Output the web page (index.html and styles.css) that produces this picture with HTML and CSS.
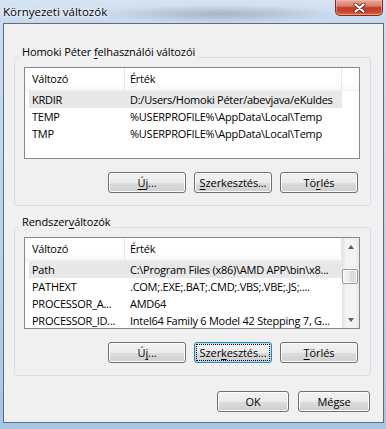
FILE: index.html
```html
<!DOCTYPE html>
<html lang="hu">
<head>
  <meta charset="UTF-8">
  <title>Környezeti változók</title>
  <link rel="stylesheet" href="styles.css">
</head>
<body>
  <div class="window">
    <div class="titlebar">
      <span class="title">Környezeti változók</span>
      <button class="close" aria-label="Bezárás">
        <svg width="13" height="10" viewBox="0 0 13 10">
          <path d="M2.5 1.5 L10.5 8.5 M10.5 1.5 L2.5 8.5" stroke="#6b2a1f" stroke-width="4" stroke-linecap="round"/>
          <path d="M2.5 1.5 L10.5 8.5 M10.5 1.5 L2.5 8.5" stroke="#fff" stroke-width="2.2" stroke-linecap="round"/>
        </svg>
      </button>
    </div>

    <div class="client">
      <!-- user variables -->
      <div class="group group-user">
        <div class="group-title">Homoki Péter <u>f</u>elhasználói változói</div>
        <div class="list">
          <div class="list-main">
            <div class="list-head">
              <span class="head-name">Változó</span>
              <span class="head-value">Érték</span>
            </div>
            <div class="row selected">
              <span class="col-name">KRDIR</span>
              <span class="col-value">D:/Users/Homoki Péter/abevjava/eKuldes</span>
            </div>
            <div class="row">
              <span class="col-name">TEMP</span>
              <span class="col-value">%USERPROFILE%\AppData\Local\Temp</span>
            </div>
            <div class="row">
              <span class="col-name">TMP</span>
              <span class="col-value">%USERPROFILE%\AppData\Local\Temp</span>
            </div>
          </div>
        </div>
        <div class="buttons">
          <button class="btn"><u>Ú</u>j...</button>
          <button class="btn"><u>S</u>zerkesztés...</button>
          <button class="btn">Tö<u>r</u>lés</button>
        </div>
      </div>

      <!-- system variables -->
      <div class="group group-system">
        <div class="group-title">Rendszer<u>v</u>áltozók</div>
        <div class="list">
          <div class="list-main">
            <div class="list-head">
              <span class="head-name">Változó</span>
              <span class="head-value">Érték</span>
            </div>
            <div class="row selected">
              <span class="col-name">Path</span>
              <span class="col-value">C:\Program Files (x86)\AMD APP\bin\x8...</span>
            </div>
            <div class="row">
              <span class="col-name">PATHEXT</span>
              <span class="col-value">.COM;.EXE;.BAT;.CMD;.VBS;.VBE;.JS;....</span>
            </div>
            <div class="row">
              <span class="col-name">PROCESSOR_A...</span>
              <span class="col-value">AMD64</span>
            </div>
            <div class="row">
              <span class="col-name">PROCESSOR_ID...</span>
              <span class="col-value">Intel64 Family 6 Model 42 Stepping 7, G...</span>
            </div>
          </div>
          <div class="scrollbar">
            <div class="sb-arrow"><span class="arrow-up"></span></div>
            <div class="sb-track"><div class="sb-thumb"></div></div>
            <div class="sb-arrow"><span class="arrow-down"></span></div>
          </div>
        </div>
        <div class="buttons">
          <button class="btn">Ú<u>j</u>...</button>
          <button class="btn focused">Szer<u>k</u>esztés...</button>
          <button class="btn"><u>T</u>örlés</button>
        </div>
      </div>

      <div class="dialog-buttons">
        <button class="btn btn-small">OK</button>
        <button class="btn btn-small">Mégse</button>
      </div>
    </div>
  </div>
</body>
</html>
```

FILE: styles.css
```css
* {
  box-sizing: border-box;
}

body {
  margin: 0;
  font-family: "Open Sans", "Noto Sans", sans-serif;
  font-size: 11px;
  letter-spacing: -0.1px;
  color: #000;
  background-color: #b9d0ea;
}

u {
  text-decoration-thickness: 1px;
  text-underline-offset: 2px;
}

.window {
  width: 386px;
  height: 429px;
  overflow: hidden;
  background: linear-gradient(to bottom, #cddef0, #bad1ea 55%, #a8c4e4);
}

/* Title bar */
.titlebar {
  height: 23px;
  display: flex;
  justify-content: space-between;
  align-items: flex-start;
  background:
    radial-gradient(ellipse 120px 9px at 220px 14px, rgba(95, 105, 120, 0.35), rgba(95, 105, 120, 0)),
    linear-gradient(to bottom, #d5e3f2, #c7d9ed);
}

.title {
  padding: 4px 0 0 3px;
  font-size: 11.5px;
  letter-spacing: 0;
  line-height: 15px;
  text-shadow: 0 0 6px #fff, 0 0 3px #fff;
}

.close {
  width: 48px;
  height: 16px;
  margin-right: 3px;
  padding: 0;
  border: 1px solid #862a1e;
  border-top: none;
  border-radius: 0 0 5px 5px;
  background: linear-gradient(to bottom, #e8a898 0%, #d97f6b 40%, #c53b25 52%, #c9462c 80%, #dc7754 100%);
  box-shadow: inset 0 0 0 1px rgba(255, 200, 190, 0.45);
  display: flex;
  align-items: center;
  justify-content: center;
}

/* Client area */
.client {
  width: 381px;
  height: 400px;
  margin-left: 3px;
  padding: 0 12px 0 10px;
  background-color: #f0f0f0;
  border: 1px solid #5d6d80;
}

.group {
  border: 1px solid #d5dfe5;
  border-radius: 3px;
  padding: 0 10px 12px 9px;
}

.group-user {
  margin-top: 33px;
}

.group-system {
  margin-top: 21px;
}

.group-title {
  width: fit-content;
  margin: -14px 0 0 -5px;
  padding: 0 3px;
  line-height: 15px;
  background-color: #f0f0f0;
}

/* List views */
.list {
  display: flex;
  height: 92px;
  margin-top: 8px;
  letter-spacing: -0.25px;
  background-color: #fff;
  border: 1px solid #828790;
  overflow: hidden;
}

.list-main {
  flex: 1;
  overflow: hidden;
}

.list-head {
  display: flex;
  height: 23px;
  line-height: 22px;
  border-bottom: 1px solid #eef0f2;
  background: linear-gradient(to bottom, #fff 70%, #f7f8f9);
}

.head-name,
.head-value {
  border-right: 1px solid #e3e8ee;
  white-space: nowrap;
}

.head-name {
  width: 100px;
  padding-left: 7px;
}

.head-value {
  width: 217px;
  padding-left: 5px;
}

.row {
  display: flex;
  width: 313px;
  height: 17px;
  margin-left: 4px;
  padding-top: 1px;
  line-height: 16px;
  white-space: nowrap;
}

.row.selected {
  background-color: #e8e8e8;
}

.col-name {
  width: 96px;
  padding-left: 3px;
  overflow: hidden;
}

.col-value {
  width: 217px;
  padding-left: 5px;
  overflow: hidden;
}

/* Scroll bar */
.scrollbar {
  width: 17px;
  display: flex;
  flex-direction: column;
  background: linear-gradient(to right, #e2e2e2, #f3f3f3 25%, #f3f3f3 75%, #e8e8e8);
}

.sb-arrow {
  height: 17px;
  display: flex;
  align-items: center;
  justify-content: center;
}

.arrow-up,
.arrow-down {
  width: 0;
  height: 0;
  border-left: 3.5px solid transparent;
  border-right: 3.5px solid transparent;
}

.arrow-up {
  border-bottom: 4px solid #5e5e5e;
}

.arrow-down {
  border-top: 4px solid #5e5e5e;
}

.sb-track {
  flex: 1;
  padding-top: 14px;
}

.sb-thumb {
  height: 15px;
  margin: 0 1px 0 0;
  border: 1px solid #9a9a9a;
  border-radius: 2px;
  background: linear-gradient(to right, #f6f6f6, #e9e9e9 50%, #d9d9d9 51%, #e2e2e2);
  box-shadow: inset 0 0 0 1px #fbfbfb;
}

/* Buttons */
.buttons {
  display: flex;
  justify-content: flex-end;
  gap: 8px;
  margin-top: 13px;
  padding-right: 2px;
}

.btn {
  width: 78px;
  height: 21px;
  padding: 0;
  font-family: inherit;
  font-size: 11px;
  letter-spacing: -0.1px;
  color: #000;
  border: 1px solid #707070;
  border-radius: 3px;
  background: linear-gradient(to bottom, #f2f2f2 0%, #ebebeb 50%, #dddddd 51%, #cfcfcf 100%);
  box-shadow: inset 0 0 0 1px #fcfcfc;
}

.btn.focused {
  border-color: #3c7fb1;
  box-shadow: inset 0 0 0 1px #9ee4fa;
  outline: 1px dotted #000;
  outline-offset: -3px;
}

.dialog-buttons {
  display: flex;
  justify-content: flex-end;
  gap: 9px;
  margin-top: 15px;
  padding-right: 1px;
}

.btn-small {
  width: 72px;
}
```
